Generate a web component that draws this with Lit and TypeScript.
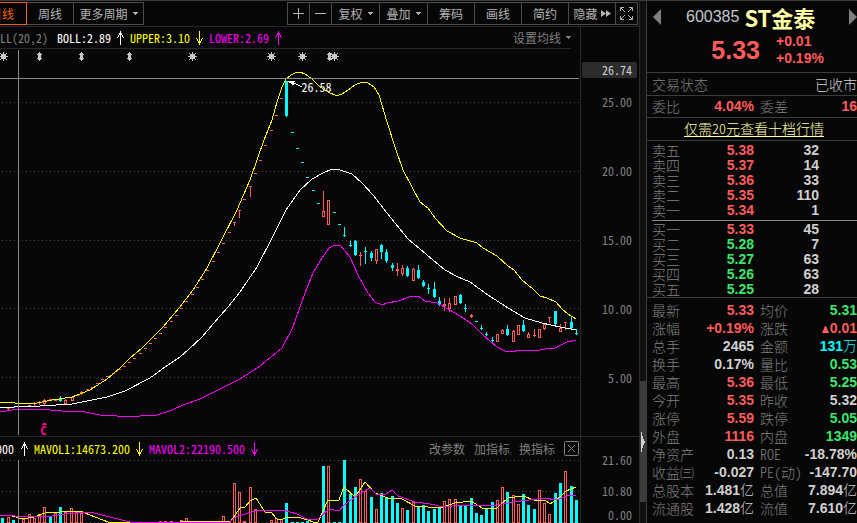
import { LitElement, html, svg, css, nothing } from "lit";
import { customElement } from "lit/decorators.js";
import { classMap } from "lit/directives/class-map.js";

type Side = "up" | "down";
/** x, high, body top, body bottom, low, side */
type Candle = [number, number, number, number, number, Side];

const upTicks: [number, number][] = [
  [29, 405], [55, 400], [50, 399], [77, 395], [87, 389], [92, 387], [97, 383], [102, 379], [107, 376],
  [113, 373], [119, 369], [124, 366], [129, 362], [134, 358], [140, 353], [145, 348], [150, 343],
  [155, 338], [160, 333], [165, 327], [171, 321], [176, 315], [181, 308], [186, 301], [192, 294],
  [197, 287], [202, 279], [207, 270], [213, 261], [218, 252], [223, 243], [229, 232], [244, 199],
  [255, 173], [260, 160], [265, 145], [271, 130], [276, 115], [281, 98],
];
const downTicks: [number, number][] = [
  [2, 407], [13, 407], [18, 406], [292, 132], [297, 148], [302, 162], [307, 177], [313, 190], [318, 203],
  [334, 212], [339, 224], [476, 321],
];
const candles: Candle[] = [
  [8, 407, 407, 409, 409, "up"], [34, 402, 403, 404, 405, "up"], [39, 401, 402, 403, 404, "up"],
  [44, 399, 400, 403, 404, "up"], [60, 396, 399, 401, 401, "down"], [65, 399, 400, 403, 403, "up"],
  [72, 396, 397, 400, 400, "up"], [81, 391, 392, 394, 394, "up"],
  [234, 222, 222, 223, 225, "up"], [239, 210, 210, 211, 217, "up"], [250, 186, 186, 187, 196, "up"],
  [286, 81, 81, 116, 116, "down"], [323, 191, 211, 216, 216, "up"], [328, 200, 200, 224, 224, "up"],
  [344, 227, 235, 236, 236, "down"], [350, 241, 245, 246, 246, "down"], [355, 240, 241, 255, 255, "down"],
  [360, 252, 255, 256, 265, "up"], [365, 247, 251, 252, 263, "down"], [371, 251, 253, 258, 260, "down"],
  [376, 249, 249, 260, 263, "up"], [381, 244, 245, 252, 258, "down"], [386, 249, 252, 261, 262, "down"],
  [392, 263, 265, 268, 270, "down"], [397, 263, 269, 271, 275, "up"], [402, 265, 268, 273, 275, "up"],
  [407, 266, 268, 276, 276, "down"], [413, 268, 269, 280, 280, "up"], [418, 265, 270, 278, 278, "down"],
  [423, 280, 282, 286, 286, "down"], [428, 284, 288, 289, 293, "down"], [434, 282, 289, 297, 297, "down"],
  [439, 297, 301, 305, 305, "down"], [444, 298, 304, 306, 310, "up"], [449, 298, 303, 308, 311, "up"],
  [455, 296, 296, 304, 304, "up"], [460, 294, 295, 303, 303, "down"], [465, 304, 308, 309, 311, "down"],
  [471, 314, 315, 317, 317, "up"], [481, 325, 328, 329, 329, "down"], [486, 332, 334, 335, 335, "down"],
  [492, 337, 340, 341, 341, "down"], [497, 334, 334, 341, 341, "up"], [502, 329, 330, 333, 333, "up"],
  [507, 325, 329, 335, 335, "down"], [513, 330, 331, 341, 341, "up"], [518, 325, 325, 334, 334, "up"],
  [523, 320, 325, 331, 331, "down"], [528, 332, 334, 337, 337, "up"], [534, 329, 335, 336, 336, "up"],
  [539, 329, 329, 337, 337, "up"], [544, 323, 324, 328, 329, "up"], [549, 317, 317, 318, 322, "up"],
  [555, 311, 311, 324, 324, "down"], [560, 324, 328, 331, 331, "up"], [565, 322, 322, 323, 329, "up"],
  [571, 317, 322, 328, 328, "down"], [576, 329, 333, 334, 334, "down"],
];

/** x, top, side */
const volumes: [number, number, Side][] = [
  [2, 518, "down"], [8, 517, "up"], [13, 520, "down"], [23, 519, "up"], [29, 514, "up"],
  [34, 518, "up"], [39, 514, "up"], [44, 507, "up"], [50, 517, "down"], [55, 513, "up"],
  [60, 507, "down"], [65, 512, "up"], [71, 508, "up"], [76, 512, "up"], [81, 513, "up"],
  [86, 522, "up"], [92, 522, "up"], [97, 522, "up"], [102, 522, "up"], [160, 521, "up"],
  [165, 521, "up"], [171, 521, "up"], [181, 520, "up"], [186, 518, "up"], [192, 521, "up"],
  [202, 522, "up"], [213, 522, "up"], [223, 516, "up"], [229, 521, "up"], [234, 483, "up"],
  [239, 492, "up"], [244, 521, "up"], [250, 487, "up"], [255, 509, "up"], [260, 522, "up"],
  [265, 522, "up"], [271, 520, "up"], [276, 518, "up"], [281, 519, "up"], [286, 503, "down"],
  [292, 522, "down"], [297, 522, "down"], [302, 522, "down"], [307, 521, "down"], [323, 466, "down"],
  [328, 466, "up"], [334, 522, "down"], [339, 522, "down"], [344, 460, "down"], [350, 494, "down"],
  [355, 487, "down"], [360, 479, "up"], [365, 491, "up"], [371, 497, "down"], [376, 509, "up"],
  [381, 493, "down"], [386, 497, "down"], [392, 496, "down"], [397, 503, "down"], [402, 508, "up"],
  [407, 510, "down"], [413, 502, "up"], [418, 507, "down"], [423, 505, "down"], [428, 511, "down"],
  [434, 509, "down"], [439, 508, "down"], [444, 501, "up"], [449, 499, "up"], [455, 499, "up"],
  [460, 506, "down"], [465, 506, "down"], [471, 498, "down"], [476, 513, "down"], [481, 515, "down"],
  [486, 508, "down"], [492, 502, "down"], [497, 500, "up"], [502, 487, "up"], [507, 492, "down"],
  [513, 495, "up"], [518, 504, "up"], [523, 494, "down"], [528, 505, "down"], [534, 509, "down"],
  [539, 490, "up"], [544, 503, "up"], [549, 514, "up"], [555, 493, "down"], [560, 483, "down"],
  [565, 471, "up"], [571, 486, "down"], [576, 500, "down"],
];

const upperBand =
  "0,402 15,403 37,403 52,400 72,397 90,390 107,379 120,368 130,358 142,348 163,327 179,308 193,290 207,268 220,243 237,210 250,180 257,160 264,140 272,120 277,102 282,87 286,79 291,75 297,72 300,72 305,74 312,79 320,87 330,93 335,95 339,95 342,94 348,90 355,85 362,82 368,83 374,87 379,95 382,105 387,122 395,147 403,170 412,187 420,202 428,208 435,218 447,231 460,238 477,243 483,248 497,256 508,266 514,270 522,280 533,289 540,296 547,298 556,302 562,309 568,314 576,319";
const middleBand =
  "0,407 14,407 40,406 72,404 87,401 107,397 125,391 150,378 165,367 180,357 189,349 202,337 213,324 228,307 240,292 257,267 272,238 286,210 300,190 312,179 323,173 332,169 340,170 352,174 362,183 373,195 387,213 408,239 420,249 433,260 445,270 458,277 470,282 488,295 508,308 525,318 542,323 560,327 576,330";
const lowerBand =
  "0,412 12,410 37,409 62,411 85,412 100,415 117,416 140,416 157,415 172,410 183,405 200,399 220,389 240,379 260,366 282,348 292,329 300,307 305,293 313,273 322,258 329,248 335,245 340,245 350,257 358,275 368,293 375,302 382,305 387,303 398,301 412,296 418,296 425,301 437,303 448,309 460,316 472,324 483,335 497,347 505,351 513,352 518,350 540,350 545,349 555,348 567,342 576,340";
const volumeMa1 =
  "0,515 12,516 23,519 34,517 45,513 60,512 80,511 90,515 108,522 180,522 190,521 215,522 231,521 240,508 245,507 250,501 256,498 265,512 271,512 277,519 283,519 287,517 297,517 308,520 313,522 318,522 323,511 328,500 339,500 344,487 355,497 365,482 375,493 388,498 402,499 415,506 440,508 455,503 471,501 482,508 497,508 508,498 523,496 534,500 545,500 550,504 560,497 566,491 576,487";
const volumeMa2 =
  "0,515 15,516 45,517 65,514 90,512 110,517 130,522 160,522 230,522 235,517 255,511 270,510 283,510 297,514 307,519 318,519 329,509 339,511 344,505 358,495 370,488 376,494 386,494 392,490 398,496 415,502 430,504 444,507 460,505 497,505 513,502 529,500 545,498 556,500 567,496 576,495";

const starMarks = [3, 192, 271, 302, 334];
const splitMarks = [39, 81, 129, 329];

const arrow = (dir: "up" | "down") => html`<svg class="arrow" width="7" height="14" viewBox="0 0 7 14" aria-hidden="true">
  ${dir === "up"
    ? svg`<path d="M3 0h1v14H3zM2 2h3v1H2zM1 4h1v2H1zM5 4h1v2H5zM2 3h1v1H2zM4 3h1v1H4zM0 6h1v1H0zM6 6h1v1H6z" />`
    : svg`<path d="M3 0h1v14H3zM2 11h3v1H2zM1 8h1v2H1zM5 8h1v2H5zM2 10h1v1H2zM4 10h1v1H4zM0 7h1v1H0zM6 7h1v1H6z" />`}
</svg>`;

const caret = html`<svg class="caret" width="5" height="3" viewBox="0 0 5 3" aria-hidden="true"><path d="M0 0h5v1H0zM1 1h3v1H1zM2 2h1v1H2z" /></svg>`;

@customElement("price-chart")
export class PriceChart extends LitElement {
  static styles = css`
    :host { display: block; position: relative; min-width: 0; }
    svg { display: block; width: 100%; height: 387px; overflow: hidden; }
    .grid { stroke: #4a4a4a; stroke-dasharray: 1 3; }
    .cross { stroke: #8c8c8c; }
    .line { fill: none; stroke-width: 1; shape-rendering: crispEdges; }
    .yellow { stroke: #ffff00; }
    .white { stroke: #ffffff; }
    .magenta { stroke: #ff00ff; }
    .pink { stroke: #ff0096; }
    .mark { fill: #c8c8c8; }
    .up { fill: #ff5c5c; }
    .hollow { fill: #070707; stroke: #ff5c5c; }
    .down { fill: #00ffff; }
    .peak, .flag {
      position: absolute;
      font: 12px/14px "Noto Sans CJK SC", sans-serif;
      font-feature-settings: "hwid";
    }
    .peak { left: 52%; top: 31px; color: #fff; }
    .flag { left: 7%; top: 374px; color: #ff0096; font-weight: 700; }
  `;

  private candle([x, hi, top, bottom, lo, side]: Candle) {
    return svg`<rect class=${side} x=${x} y=${hi} width="1" height=${lo - hi + 1} />
      ${side === "up" && bottom - top > 2
        ? svg`<rect class="hollow" x=${x - 0.5} y=${top + 0.5} width="2" height=${bottom - top} />`
        : svg`<rect class=${side} x=${x - 1} y=${top} width="3" height=${Math.max(1, bottom - top)} />`}`;
  }

  render() {
    return html`
      <svg viewBox="0 49 580 387" preserveAspectRatio="none" role="img" aria-label="BOLL">
        ${[102, 171, 240, 308, 377].map((y) => svg`<line class="grid" x1="2" x2="580" y1=${y + 0.5} y2=${y + 0.5} />`)}
        ${starMarks.map((x) => svg`<path class="mark" d="M${x} 52h1v9h-1zM${x - 4} 56h9v1h-9zM${x - 2} 54h5v5h-5zM${x - 3} 53h1v1h-1zM${x + 3} 53h1v1h-1zM${x - 3} 59h1v1h-1zM${x + 3} 59h1v1h-1z" />`)}
        ${splitMarks.map((x) => svg`<path class="mark" d="M${x} 52h1v9h-1zM${x - 1} 53h3v7h-3zM${x - 2} 54h5v1h-5zM${x - 2} 58h5v1h-5z" />`)}
        ${upTicks.map(([x, y]) => svg`<rect class="up" x=${x - 1} y=${y} width="3" height="1" />`)}
        ${downTicks.map(([x, y]) => svg`<rect class="down" x=${x - 1} y=${y} width="3" height="1" />`)}
        ${candles.map((c) => this.candle(c))}
        <polyline class="line magenta" points=${lowerBand} />
        <polyline class="line white" points=${middleBand} />
        <polyline class="line yellow" points=${upperBand} />
        <line class="cross" x1="0" x2="579" y1="78.5" y2="78.5" />
        <line class="cross" x1="18.5" x2="18.5" y1="50" y2="435" />
        <path class="line white" d="M288 81.5h7M289 82.5h5M291 83.5h3M292 84.5h2M294 83l8 4" />
        <path class="line pink" d="M42 424.5h5M43 423.5h3" />
      </svg>
      <span class="peak">26.58</span>
      <span class="flag">C</span>
    `;
  }
}

@customElement("volume-chart")
export class VolumeChart extends LitElement {
  static styles = css`
    :host { display: block; min-width: 0; }
    svg { display: block; width: 100%; height: 63px; }
    .grid { stroke: #4a4a4a; stroke-dasharray: 1 3; }
    .cross { stroke: #8c8c8c; }
    .line { fill: none; shape-rendering: crispEdges; }
    .yellow { stroke: #ffff00; }
    .magenta { stroke: #ff00ff; }
    .up { fill: #070707; stroke: #ff5c5c; }
    .down { fill: #00ffff; }
  `;

  render() {
    return html`<svg viewBox="0 460 580 63" preserveAspectRatio="none" role="img" aria-label="MAVOL">
      ${[460, 491, 522].map((y) => svg`<line class="grid" x1="2" x2="580" y1=${y + 0.5} y2=${y + 0.5} />`)}
      ${volumes.map(([x, y, side]) =>
        side === "up"
          ? svg`<rect class="up" x=${x - 0.5} y=${y + 0.5} width="2" height=${Math.max(0, 522 - y)} />`
          : svg`<rect class="down" x=${x - 1} y=${y} width="3" height=${523 - y} />`)}
      <polyline class="line yellow" points=${volumeMa1} />
      <polyline class="line magenta" points=${volumeMa2} />
      <line class="cross" x1="18.5" x2="18.5" y1="460" y2="523" />
    </svg>`;
  }
}

type Tone = "red" | "green" | "plain" | "cyan";
const asks = [["卖五", "5.38", "32"], ["卖四", "5.37", "14"], ["卖三", "5.36", "33"], ["卖二", "5.35", "110"], ["卖一", "5.34", "1"]];
const bids = [["买一", "5.33", "45"], ["买二", "5.28", "7"], ["买三", "5.27", "63"], ["买四", "5.26", "63"], ["买五", "5.25", "28"]];

/** label, value, tone, unit */
type Stat = [string, string, Tone, string?];
const stats: [Stat, Stat][] = [
  [["最新", "5.33", "red"], ["均价", "5.31", "green"]],
  [["涨幅", "+0.19%", "red"], ["涨跌", "0.01", "red"]],
  [["总手", "2465", "plain"], ["金额", "131", "cyan", "万"]],
  [["换手", "0.17%", "plain"], ["量比", "0.53", "green"]],
  [["最高", "5.36", "red"], ["最低", "5.25", "green"]],
  [["今开", "5.35", "red"], ["昨收", "5.32", "plain"]],
  [["涨停", "5.59", "red"], ["跌停", "5.05", "green"]],
  [["外盘", "1116", "red"], ["内盘", "1349", "green"]],
  [["净资产", "0.13", "plain"], ["ROE", "-18.78%", "plain"]],
  [["收益㈢", "-0.027", "plain"], ["PE(动)", "-147.70", "plain"]],
  [["总股本", "1.481", "plain", "亿"], ["总值", "7.894", "plain", "亿"]],
  [["流通股", "1.428", "plain", "亿"], ["流值", "7.610", "plain", "亿"]],
];

@customElement("quote-panel")
export class QuotePanel extends LitElement {
  static styles = css`
    :host {
      display: block;
      min-width: 0;
      overflow: hidden;
      border-left: 1px solid #3c3c3c;
      font: 14px/18px "Noto Sans CJK SC", sans-serif;
      font-weight: 300;
      font-feature-settings: "hwid";
      color: #808080;
      white-space: nowrap;
    }
    .head { height: 71px; border-bottom: 1px solid #3c3c3c; }
    .title { display: flex; align-items: center; height: 32px; padding-left: 6px; }
    .name { display: flex; align-items: center; gap: 5px; margin: 0 auto 0 25px; color: #ffffa8; font: 700 22px/32px "Noto Sans CJK SC", sans-serif; font-feature-settings: normal; }
    .code { color: #c0c8d0; font: 16px/32px "Liberation Sans", sans-serif; }
    .nav { display: flex; padding: 0; border: 0; background: none; fill: #808080; }
    .price { display: grid; grid-template-columns: 113px auto; column-gap: 16px; align-items: center; color: #ff5c5c; font-family: "Liberation Sans", sans-serif; font-weight: 700; font-feature-settings: normal; }
    .last { text-align: right; font-size: 25px; line-height: 32px; }
    .delta { line-height: 17px; }
    .row { display: flex; align-items: center; justify-content: space-between; padding-left: 5px; height: 22px; border-bottom: 1px solid #3c3c3c; }
    .value { color: #d0d0d0; }
    .link { height: 22px; padding-left: 4px; border-bottom: 1px solid #3c3c3c; line-height: 21px; text-align: center; }
    a { color: #ffffa8; text-underline-offset: 2px; }
    table { width: 100%; border-collapse: collapse; table-layout: fixed; }
    th { padding: 0; text-align: left; font-weight: 300; }
    td { padding: 0; text-align: right; font: 700 14px/15px "Liberation Sans", sans-serif; }
    .book { margin-left: 5px; padding-top: 2px; }
    .book th, .book td { height: 15px; line-height: 15px; }
    .asks { padding-bottom: 2px; border-bottom: 1px solid #8c8c8c; }
    .bids { padding-top: 1px; }
    .rule { border-bottom: 1px solid #3c3c3c; }
    .c1 { width: 42px; }
    .c2 { width: 60px; }
    .c3 { width: 65px; }
    .s3 { width: 47px; }
    .stats { padding: 3px 0 0 5px; }
    .stats th, .stats td { height: 18px; line-height: 18px; }
    .ratio { padding-left: 5px; border-bottom: 1px solid #3c3c3c; }
    .ratio td, .ratio th { height: 21px; line-height: 21px; }
    .second { padding-left: 6px; }
    .red { color: #ff5c5c; }
    .green { color: #3ce66e; }
    .plain { color: #d0d0d0; }
    .cyan { color: #00ffff; }
    .unit { font: 300 14px/15px "Noto Sans CJK SC", sans-serif; }
    .tri { fill: #ff5c5c; margin-right: 1px; }
  `;

  private stat([label, value, tone, unit]: Stat, second: boolean) {
    return html`<th scope="row" class=${classMap({ second })}>${label}</th>
      <td class=${tone}>${label === "涨跌"
        ? html`<svg class="tri" width="7" height="7" viewBox="0 0 7 7" aria-hidden="true"><path d="M3 0h1l3 7H0z" /></svg>`
        : nothing}${value}${unit ? html`<span class="unit">${unit}</span>` : nothing}</td>`;
  }

  private book(rows: string[][], side: string) {
    return html`<table aria-label=${side}>
      <colgroup><col class="c1" /><col class="c2" /><col class="c3" /><col /></colgroup>
      ${rows.map(([label, price, size]) => html`<tr>
        <th scope="row">${label}</th>
        <td class=${Number(price) > 5.32 ? "red" : "green"}>${price}</td>
        <td class="plain">${size}</td><td></td>
      </tr>`)}
    </table>`;
  }

  render() {
    return html`
      <div class="head">
        <div class="title">
          <button class="nav" aria-label="‹"><svg width="8" height="16" viewBox="0 0 8 16"><path d="M8 0v16L0 8z" /></svg></button>
          <h1 class="name"><span class="code">600385</span>ST金泰</h1>
          <button class="nav" aria-label="›"><svg width="8" height="16" viewBox="0 0 8 16"><path d="M0 0v16l8-8z" /></svg></button>
        </div>
        <div class="price"><div class="last">5.33</div><div class="delta"><div>+0.01</div><div>+0.19%</div></div></div>
      </div>
      <div class="row"><span>交易状态</span><span class="value">已收市</span></div>
      <div class="ratio"><table>
        <colgroup><col class="c1" /><col class="c2" /><col class="s3" /><col /></colgroup>
        <tr><th scope="row">委比</th><td class="red">4.04%</td><th scope="row" class="second">委差</th><td class="red">16</td></tr>
      </table></div>
      <div class="link"><a href="#depth">仅需20元查看十档行情</a></div>
      <div class="book asks">${this.book(asks, "卖")}</div>
      <div class="book bids">${this.book(bids, "买")}</div>
      <div class="rule"></div>
      <div class="stats"><table>
        <colgroup><col class="c1" /><col class="c2" /><col class="s3" /><col /></colgroup>
        ${stats.map(([a, b]) => html`<tr>${this.stat(a, false)}${this.stat(b, true)}</tr>`)}
      </table></div>
    `;
  }
}

@customElement("app-root")
export class AppRoot extends LitElement {
  static styles = css`
    :host {
      display: grid;
      grid-template-columns: minmax(0, 1fr) 7px 211px;
      overflow: hidden;
      border-top: 1px solid #3c3c3c;
      background: #070707;
      color: #808080;
      font: 12px/16px "Noto Sans CJK SC", sans-serif;
      font-feature-settings: "hwid";
      white-space: nowrap;
    }
    button { font: inherit; font-feature-settings: inherit; color: inherit; background: none; border: 0; padding: 0; margin: 0; }
    .left { min-width: 0; overflow: hidden; }
    .toolbar { display: flex; justify-content: space-between; height: 25px; padding: 1px 1px 0 0; box-sizing: border-box; color: #b4b4b4; }
    .group { display: flex; height: 23px; box-sizing: border-box; border: 1px solid #4c4c4c; border-right: 0; }
    .periods { margin-left: -23px; border-left: 0; }
    .tool { display: flex; align-items: center; justify-content: center; gap: 5px; box-sizing: border-box; width: 47px; border-right: 1px solid #4c4c4c; }
    .tool.icon { width: 22px; }
    .tool.drop { width: 48px; }
    .tool.more { width: 70px; }
    .tool.tight { gap: 3px; }
    .tool.active { width: 50px; margin: -1px 0; border: 1px solid #f06414; color: #f06414; }
    .caret { fill: currentColor; }
    .glyph { fill: none; stroke: currentColor; }
    .solid { fill: currentColor; }
    .pane { display: grid; grid-template-columns: minmax(0, 1fr) 59px; border-top: 1px solid #282828; }
    .plot { min-width: 0; overflow: hidden; }
    .info { display: flex; align-items: center; gap: 6px; height: 21px; margin-right: 9px; }
    .main-info { border-bottom: 1px solid #282828; }
    .label { margin: 0 3px 0 -12px; }
    .clip { margin-left: -4px; margin-right: 1px; }
    .vol-info { height: 23px; margin-right: 1px; }
    .push { margin-left: auto; }
    .white { color: #fff; }
    .yellow { color: #ffff00; }
    .magenta { color: #ff00ff; }
    .arrow { display: block; fill: currentColor; }
    .setting { display: flex; align-items: center; gap: 5px; }
    .links { display: flex; align-items: center; gap: 9px; }
    .close { display: flex; }
    .axis { box-sizing: border-box; border-left: 1px solid #282828; padding: 35px 2px 0 1px; color: #808080; }
    .axis div { height: 16px; padding-right: 5px; text-align: right; }
    .axis .tag { margin-bottom: 16px; border-radius: 2px; background: #2c2c2c; color: #d0d0d0; }
    .axis .tick { margin-bottom: 53px; }
    .axis.vol { padding-top: 15px; }
    .axis.vol .tick { margin-bottom: 15px; }
    .axis.vol .near { margin-bottom: 8px; }
    .strip { display: flex; flex-direction: column; border-left: 1px solid #282828; background: #101010; }
    .thumb { display: flex; align-items: center; width: 6px; height: 121px; margin-top: 380px; background: #3c3c3c; fill: #d0d0d0; }
  `;

  render() {
    return html`
      <main class="left">
        <nav class="toolbar">
          <div class="group periods">
            <button class="tool active">日线</button>
            <button class="tool">周线</button>
            <button class="tool more">更多周期${caret}</button>
          </div>
          <div class="group">
            <button class="tool icon" aria-label="+"><svg class="glyph" width="11" height="11" viewBox="0 0 11 11"><path d="M0 5.5h11M5.5 0v11" /></svg></button>
            <button class="tool icon" aria-label="-"><svg class="glyph" width="11" height="11" viewBox="0 0 11 11"><path d="M0 5.5h11" /></svg></button>
            <button class="tool drop">复权${caret}</button>
            <button class="tool drop">叠加${caret}</button>
            <button class="tool">筹码</button>
            <button class="tool">画线</button>
            <button class="tool">简约</button>
            <button class="tool tight">隐藏<svg class="solid" width="10" height="7" viewBox="0 0 10 7"><path d="M0 0l5 3.5L0 7zM5 0l5 3.5L5 7z" /></svg></button>
            <button class="tool icon" aria-label="⛶"><svg class="glyph" width="13" height="13" viewBox="0 0 13 13"><path d="M.5 4V.5H4M9 .5h3.5V4M.5 9v3.5H4M9 12.5h3.5V9M1 1l4 4M12 1L8 5M1 12l4-4M12 12L8 8" /></svg></button>
          </div>
        </nav>
        <section class="pane">
          <div class="plot">
            <div class="info main-info">
              <span class="label">BOLL(20,2)</span>
              <span class="white">BOLL:2.89</span><span class="white">${arrow("up")}</span>
              <span class="yellow">UPPER:3.10</span><span class="yellow">${arrow("down")}</span>
              <span class="magenta">LOWER:2.69</span><span class="magenta">${arrow("up")}</span>
              <button class="setting push">设置均线${caret}</button>
            </div>
            <price-chart></price-chart>
          </div>
          <div class="axis">
            <div class="tag">26.74</div>
            <div class="tick">25.00</div><div class="tick">20.00</div><div class="tick">15.00</div>
            <div class="tick">10.00</div><div>5.00</div>
          </div>
        </section>
        <section class="pane">
          <div class="plot">
            <div class="info vol-info">
              <span class="white clip">000</span><span class="white">${arrow("up")}</span>
              <span class="yellow">MAVOL1:14673.200</span><span class="yellow">${arrow("down")}</span>
              <span class="magenta">MAVOL2:22190.500</span><span class="magenta">${arrow("down")}</span>
              <div class="links push">
                <button>改参数</button><button>加指标</button><button>换指标</button>
                <button class="close" aria-label="×"><svg class="glyph" width="15" height="15" viewBox="0 0 15 15"><rect x=".5" y=".5" width="14" height="14" rx="1" /><path d="M4 4l7 7M11 4l-7 7" /></svg></button>
              </div>
            </div>
            <volume-chart></volume-chart>
          </div>
          <div class="axis vol">
            <div class="tick">21.60</div><div class="near">10.80</div><div>0.00</div>
          </div>
        </section>
      </main>
      <div class="strip"><div class="thumb"><svg width="5" height="20" viewBox="0 0 5 20"><path d="M1 0h1v4h1v3h1v2h1v2H4v2H3v3H2v4H1z" /></svg></div></div>
      <quote-panel></quote-panel>
    `;
  }
}
